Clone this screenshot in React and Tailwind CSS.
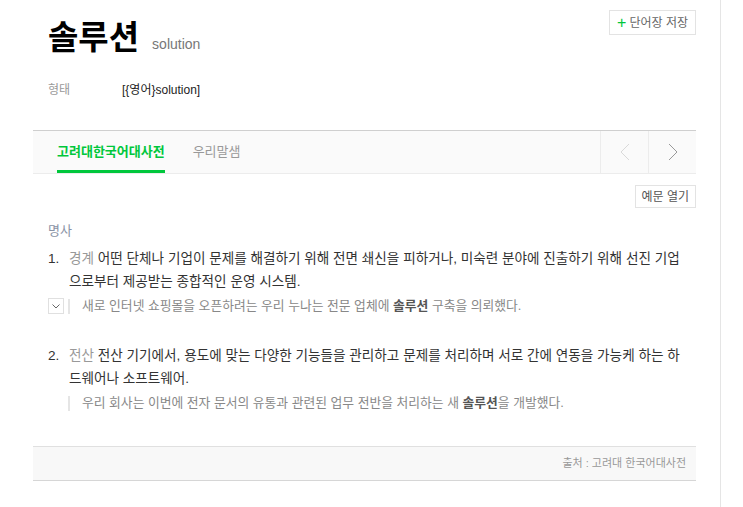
import React from "react";

const font = { fontFamily: '"Liberation Sans", "Noto Sans CJK KR", sans-serif' };

const meanings = [
  {
    no: "1.",
    field: "경계",
    text: "어떤 단체나 기업이 문제를 해결하기 위해 전면 쇄신을 피하거나, 미숙련 분야에 진출하기 위해 선진 기업으로부터 제공받는 종합적인 운영 시스템.",
    example: ["새로 인터넷 쇼핑몰을 오픈하려는 우리 누나는 전문 업체에 ", "솔루션", " 구축을 의뢰했다."],
    toggle: true,
  },
  {
    no: "2.",
    field: "전산",
    text: "전산 기기에서, 용도에 맞는 다양한 기능들을 관리하고 문제를 처리하며 서로 간에 연동을 가능케 하는 하드웨어나 소프트웨어.",
    example: ["우리 회사는 이번에 전자 문서의 유통과 관련된 업무 전반을 처리하는 새 ", "솔루션", "을 개발했다."],
    toggle: false,
  },
];

const Chevron = ({ dir = "right", className }) => (
  <svg width="10" height="18" viewBox="0 0 10 18" className={className}>
    <path
      d={dir === "right" ? "M1 1 L9 9 L1 17" : "M9 1 L1 9 L9 17"}
      fill="none"
      stroke="currentColor"
      strokeWidth="1"
    />
  </svg>
);

export default function App() {
  return (
    <div className="min-h-[507px] bg-white text-[#333]" style={font}>
      <div className="w-[721px] min-h-[507px] border-r border-[#e5e5e5] pl-[33px] pr-[24px]">
        {/* header */}
        <div className="relative px-[15px] pt-[18px]">
          <div className="flex items-baseline">
            <h1 className="text-[33px] font-bold text-black leading-[40px]">솔루션</h1>
            <span className="ml-[13px] text-[14px] text-[#777]">solution</span>
          </div>
          <button className="absolute top-[10px] right-0 h-[25px] px-[7px] flex items-center gap-[3px] border border-[#e3e3e3] text-[12px] text-[#666] bg-white">
            <span className="text-[#00c73c] text-[16px] leading-none font-light">+</span>
            단어장 저장
          </button>
          <div className="flex mt-[24px] text-[12px] leading-[16px]">
            <span className="w-[74px] text-[#999]">형태</span>
            <span className="text-[#222]">[{"{"}영어{"}"}solution]</span>
          </div>
        </div>

        {/* tabs */}
        <div className="mt-[32px] h-[44px] flex border-t border-[#cfcfcf] border-b border-b-[#ececec] bg-[#fafafa]">
          <div className="flex flex-1 pl-[24px] gap-[28px] text-[13px]">
            <div className="relative flex items-center text-[#00c73c] font-bold">
              고려대한국어대사전
              <span className="absolute left-0 right-0 bottom-[0px] h-[3px] bg-[#00c73c]"></span>
            </div>
            <div className="flex items-center text-[#999]">우리말샘</div>
          </div>
          <div className="w-[48px] flex items-center justify-center border-l border-[#ececec] text-[#d9d9d9]">
            <Chevron dir="left" />
          </div>
          <div className="w-[48px] flex items-center justify-center border-l border-[#ececec] text-[#999]">
            <Chevron dir="right" />
          </div>
        </div>

        <div className="flex justify-end mt-[11px]">
          <button className="h-[23px] px-[6px] border border-[#e3e3e3] text-[12px] text-[#555] bg-white">예문 열기</button>
        </div>

        {/* meanings */}
        <div className="pl-[15px] pr-[6px]">
          <div className="text-[13px] text-[#8a93a5] mt-[14px] leading-[18px]">명사</div>
          {meanings.map((m, i) => (
            <div key={i} className={i === 0 ? "mt-[7px]" : "mt-[26px]"}>
              <div className="flex text-[13.6px] leading-[23px]">
                <span className="w-[21px] shrink-0 text-[#333]">{m.no}</span>
                <p className="text-[#333]">
                  <span className="text-[#999]">{m.field}</span> {m.text}
                </p>
              </div>
              <div className="flex items-center mt-[1px] h-[24px] text-[12.8px]">
                <span
                  className={
                    m.toggle
                      ? "w-[16px] h-[16px] shrink-0 flex items-center justify-center border border-[#e0e0e0]"
                      : "w-[16px] h-[16px] shrink-0"
                  }
                >
                  {m.toggle && (
                    <svg width="8" height="5" viewBox="0 0 8 5">
                      <path d="M0.5 0.5 L4 4 L7.5 0.5" fill="none" stroke="#666" strokeWidth="1" />
                    </svg>
                  )}
                </span>
                <span className="ml-[4px] w-[2px] h-[15px] bg-[#e5e5e5] shrink-0"></span>
                <span className="ml-[12px] text-[#888]">
                  {m.example[0]}
                  <b className="text-[#555]">{m.example[1]}</b>
                  {m.example[2]}
                </span>
              </div>
            </div>
          ))}
        </div>

        {/* source */}
        <div className="mt-[31px] h-[35px] flex items-center justify-end pr-[10px] border-t border-[#e0e0e0] border-b border-b-[#d6d6d6] bg-[#f8f8f8] text-[11px] text-[#999]">
          출처 : 고려대 한국어대사전
        </div>
      </div>
    </div>
  );
}
